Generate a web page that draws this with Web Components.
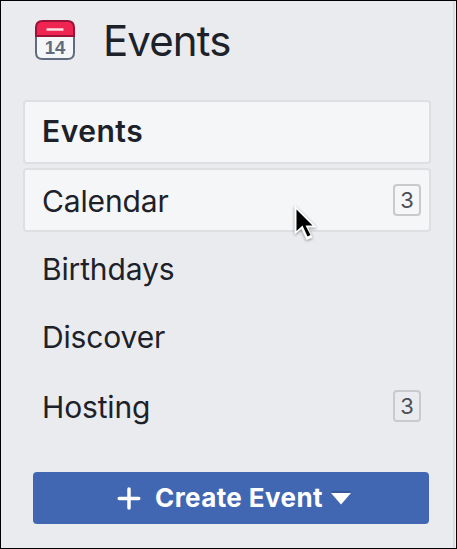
<!DOCTYPE html>
<html lang="en">
<head>
<meta charset="utf-8">
<title>Events</title>
<style>
  html, body {
    margin: 0;
    height: 100%;
  }

  body {
    overflow: hidden;
    font-family: Inter, Roboto, "Liberation Sans", sans-serif;
    color: #1d2129;
  }
</style>
</head>
<body>
<events-sidebar>
  <events-header slot="header">Events</events-header>
  <nav-item selected>Events</nav-item>
  <nav-item hovered count="3">Calendar</nav-item>
  <nav-item>Birthdays</nav-item>
  <nav-item>Discover</nav-item>
  <nav-item count="3">Hosting</nav-item>
  <create-button slot="footer">Create Event</create-button>
</events-sidebar>
<mouse-pointer></mouse-pointer>

<script>
class EventsSidebar extends HTMLElement {
  constructor() {
    super();
    this.attachShadow({ mode: "open" }).innerHTML = `
      <style>
        :host {
          display: flex;
          flex-direction: column;
          box-sizing: border-box;
          width: 457px;
          height: 549px;
          padding: 12px 22px 0;
          border: 1px solid #000;
          background: linear-gradient(to left, #f1f2f5 1px, #d9dbe0 1px 3px, #e9ebee 3px);
        }

        nav {
          display: grid;
          grid-template-rows: 64px 64px 65px 64px 66px;
          row-gap: 4px;
          width: 408px;
          margin: 31px 0 33px;
        }
      </style>
      <slot name="header"></slot>
      <nav><slot></slot></nav>
      <slot name="footer"></slot>
    `;
  }
}

class EventsHeader extends HTMLElement {
  constructor() {
    super();
    this.attachShadow({ mode: "open" }).innerHTML = `
      <style>
        :host {
          display: flex;
          align-items: center;
          height: 56px;
          padding-left: 11px;
        }

        svg {
          width: 42px;
          height: 42px;
          margin-bottom: 2px;
          flex-shrink: 0;
        }

        text {
          font: bold 18.5px "Liberation Sans", sans-serif;
          fill: #606b7d;
        }

        h1 {
          margin: 0 0 0 27px;
          font-size: 42px;
          font-weight: 400;
          line-height: 56px;
          letter-spacing: -0.9px;
        }
      </style>
      <svg viewBox="0 0 42 42">
        <rect x="2" y="2" width="38" height="38" rx="6.5" fill="#f5f6f7"/>
        <path d="M2 17V8.500Q2 2 8.500 2H33.500Q40 2 40 8.500V17Z" fill="#f02450"/>
        <path d="M2 17V33.500Q2 40 8.500 40H33.500Q40 40 40 33.500V17" fill="none" stroke="#606b7d" stroke-width="2"/>
        <path d="M2 17V8.500Q2 2 8.500 2H33.500Q40 2 40 8.500V17Z" fill="none" stroke="#9b1238" stroke-width="2"/>
        <path d="M12.500 10.500H29.500" stroke="#fbdde4" stroke-width="2.500"/>
        <text x="21" y="35" text-anchor="middle">14</text>
      </svg>
      <h1><slot></slot></h1>
    `;
  }
}

class NavItem extends HTMLElement {
  constructor() {
    super();
    this.attachShadow({ mode: "open" }).innerHTML = `
      <style>
        :host {
          display: flex;
          align-items: center;
          justify-content: space-between;
          box-sizing: border-box;
          padding: 0 8px 0 17px;
          border: 2px solid transparent;
          border-radius: 4px;
          font-size: 30px;
          line-height: 36px;
          letter-spacing: -0.15px;
        }

        :host([selected]),
        :host([hovered]) {
          background: #f5f6f7;
          border-color: #dddfe2;
        }

        :host([selected]) {
          font-weight: 600;
          letter-spacing: 0.5px;
        }

        :host([selected]) .label {
          padding-bottom: 2px;
        }

        :host([count]) .label {
          padding-top: 2px;
        }

        .count {
          box-sizing: border-box;
          width: 28px;
          height: 32px;
          border: 2px solid #c8cacd;
          border-radius: 4px;
          color: #4b4f56;
          font-size: 22px;
          font-weight: 400;
          line-height: 28px;
          letter-spacing: 0;
          text-align: center;
        }
      </style>
      <span class="label"><slot></slot></span>
    `;
  }

  connectedCallback() {
    const count = this.getAttribute("count");
    if (!count || this.shadowRoot.querySelector(".count")) return;
    const badge = document.createElement("span");
    badge.className = "count";
    badge.textContent = count;
    this.shadowRoot.append(badge);
  }
}

class CreateButton extends HTMLElement {
  constructor() {
    super();
    this.attachShadow({ mode: "open" }).innerHTML = `
      <style>
        :host {
          display: block;
          margin-left: 10px;
        }

        button {
          display: flex;
          align-items: center;
          justify-content: center;
          width: 396px;
          height: 52px;
          padding: 0 0 0 6px;
          border: 0;
          border-radius: 4px;
          background: #4267b2;
          color: #fff;
          font: 650 26px/52px Inter, Roboto, sans-serif;
          letter-spacing: 0.4px;
        }

        .plus {
          width: 24px;
          height: 24px;
          margin-right: 14px;
        }

        .caret {
          width: 20px;
          height: 14px;
          margin-left: 8px;
        }
      </style>
      <button type="button">
        <svg class="plus" viewBox="0 0 24 24" fill="none" stroke="#fff" stroke-width="3.500" stroke-linecap="round">
          <path d="M2.250 12.500H21.750M12 3V22"/>
        </svg>
        <span><slot></slot></span>
        <svg class="caret" viewBox="0 0 20 14">
          <path d="M0.500 0H19.500V2H0.500Z" fill="#365899"/>
          <path d="M0 2H20L10 13.500Z" fill="#fff"/>
        </svg>
      </button>
    `;
  }
}

class MousePointer extends HTMLElement {
  constructor() {
    super();
    this.attachShadow({ mode: "open" }).innerHTML = `
      <style>
        :host {
          position: absolute;
          left: 291px;
          top: 202px;
          width: 28px;
          height: 42px;
        }

        svg {
          display: block;
          filter: drop-shadow(0 1.5px 1.5px rgba(0, 0, 0, 0.4));
        }
      </style>
      <svg width="28" height="42" viewBox="0 0 28 42">
        <path d="M3.500 3V32.500L10.500 27L15.500 38L21.500 35.500L17 25.500H26Z" fill="#fff"/>
        <path d="M5.500 7.500V29L11.500 23.500L16.500 34.500L19.500 33L14.500 23.500H21.500Z" fill="#000"/>
      </svg>
    `;
  }
}

customElements.define("events-sidebar", EventsSidebar);
customElements.define("events-header", EventsHeader);
customElements.define("nav-item", NavItem);
customElements.define("create-button", CreateButton);
customElements.define("mouse-pointer", MousePointer);
</script>
</body>
</html>
